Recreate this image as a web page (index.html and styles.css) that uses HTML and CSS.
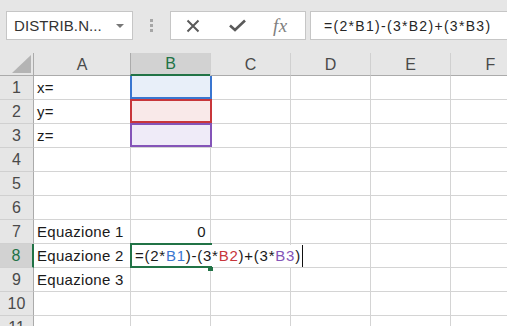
FILE: index.html
```html
<!DOCTYPE html>
<html lang="it">
<head>
    <meta charset="UTF-8">
    <title>Foglio di calcolo</title>
    <link rel="stylesheet" href="styles.css">
</head>
<body>
    <!-- Barra della formula -->
    <div class="toolbar">
        <div class="name-box">
            <span class="name-text">DISTRIB.N...</span>
            <span class="name-arrow"></span>
        </div>
        <div class="grip">
            <span></span><span></span><span></span>
        </div>
        <div class="fx-box">
            <svg class="icon-cancel" width="14" height="14" viewBox="0 0 14 14">
                <path d="M1.5 1.5 L12.5 12.5 M12.5 1.5 L1.5 12.5" stroke="#5a5a5a" stroke-width="2" fill="none"/>
            </svg>
            <svg class="icon-ok" width="17" height="13" viewBox="0 0 17 13">
                <path d="M1 6.5 L6 11 L16 1.5" stroke="#5a5a5a" stroke-width="2.6" fill="none"/>
            </svg>
            <span class="fx">fx</span>
        </div>
        <div class="formula-input">=(2*B1)-(3*B2)+(3*B3)</div>
    </div>

    <!-- Griglia -->
    <div class="sheet">
        <div class="hdr corner">
            <svg width="19" height="18" viewBox="0 0 19 18"><polygon points="19,0 19,18 0,18" fill="#b4b4b4"/></svg>
        </div>
        <div class="hdr col first">A</div>
        <div class="hdr col sel">B</div>
        <div class="hdr col">C</div>
        <div class="hdr col">D</div>
        <div class="hdr col">E</div>
        <div class="hdr col">F</div>

        <div class="hdr row">1</div>
        <div class="cell first">x=</div>
        <div class="cell ref ref-blue"></div>
        <div class="cell"></div><div class="cell"></div><div class="cell"></div><div class="cell"></div>

        <div class="hdr row">2</div>
        <div class="cell first">y=</div>
        <div class="cell ref ref-red"></div>
        <div class="cell"></div><div class="cell"></div><div class="cell"></div><div class="cell"></div>

        <div class="hdr row">3</div>
        <div class="cell first">z=</div>
        <div class="cell ref ref-purple"></div>
        <div class="cell"></div><div class="cell"></div><div class="cell"></div><div class="cell"></div>

        <div class="hdr row">4</div>
        <div class="cell first"></div>
        <div class="cell"></div><div class="cell"></div><div class="cell"></div><div class="cell"></div><div class="cell"></div>

        <div class="hdr row">5</div>
        <div class="cell first"></div>
        <div class="cell"></div><div class="cell"></div><div class="cell"></div><div class="cell"></div><div class="cell"></div>

        <div class="hdr row">6</div>
        <div class="cell first"></div>
        <div class="cell"></div><div class="cell"></div><div class="cell"></div><div class="cell"></div><div class="cell"></div>

        <div class="hdr row">7</div>
        <div class="cell first">Equazione 1</div>
        <div class="cell num">0</div>
        <div class="cell"></div><div class="cell"></div><div class="cell"></div><div class="cell"></div>

        <div class="hdr row sel">8</div>
        <div class="cell first">Equazione 2</div>
        <div class="cell active">
            <span class="edit">=(2*<span class="c-blue">B1</span>)-(3*<span class="c-red">B2</span>)+(3*<span class="c-purple">B3</span>)</span>
            <span class="handle"></span>
        </div>
        <div class="cell"></div><div class="cell"></div><div class="cell"></div><div class="cell"></div>

        <div class="hdr row">9</div>
        <div class="cell first">Equazione 3</div>
        <div class="cell"></div><div class="cell"></div><div class="cell"></div><div class="cell"></div><div class="cell"></div>

        <div class="hdr row">10</div>
        <div class="cell first"></div>
        <div class="cell"></div><div class="cell"></div><div class="cell"></div><div class="cell"></div><div class="cell"></div>

        <div class="hdr row">11</div>
        <div class="cell first"></div>
        <div class="cell"></div><div class="cell"></div><div class="cell"></div><div class="cell"></div><div class="cell"></div>
    </div>
</body>
</html>
```

FILE: styles.css
```css
/* Base */
body {
    margin: 0;
    background-color: #e6e6e6;
    font-family: 'Liberation Sans', Arial, sans-serif;
    color: #222;
    overflow: hidden;
    height: 326px;
}

/* Barra della formula */
.toolbar {
    display: flex;
    align-items: stretch;
    height: 29px;
    padding: 11px 0 13px 6px;
}

.name-box {
    width: 127px;
    background: white;
    border: 1px solid #c6c6c6;
    display: flex;
    align-items: center;
    justify-content: space-between;
    padding: 0 8px 0 7px;
    box-sizing: border-box;
}

.name-text {
    font-size: 15px;
    color: #333;
    letter-spacing: 0.1px;
}

.name-arrow {
    width: 0;
    height: 0;
    border-left: 4px solid transparent;
    border-right: 4px solid transparent;
    border-top: 4px solid #777;
}

.grip {
    width: 37px;
    display: flex;
    flex-direction: column;
    align-items: center;
    justify-content: center;
    gap: 2px;
}

.grip span {
    width: 3px;
    height: 3px;
    background: #a6a6a6;
}

.fx-box {
    width: 136px;
    background: white;
    border: 1px solid #c6c6c6;
    box-sizing: border-box;
    display: flex;
    align-items: center;
    padding-left: 15px;
}

.icon-cancel {
    margin-right: 29px;
}

.icon-ok {
    margin-right: 27px;
}

.fx {
    font-family: 'Liberation Serif', 'Times New Roman', serif;
    font-style: italic;
    font-size: 19px;
    color: #7f7f7f;
    letter-spacing: 0.5px;
}

.formula-input {
    flex: 1;
    margin-left: 4px;
    background: white;
    border: 1px solid #c6c6c6;
    border-right: none;
    display: flex;
    align-items: center;
    padding-left: 13px;
    font-size: 14px;
    letter-spacing: 1.3px;
    color: #262626;
}

/* Griglia */
.sheet {
    display: grid;
    grid-template-columns: 34px 96px 80px 80px 80px 80px 80px;
    grid-template-rows: 23px repeat(11, 24px);
    background: white;
    font-size: 15px;
}

.hdr {
    background: #e6e6e6;
    color: #4a4a4a;
    display: flex;
    align-items: center;
    justify-content: center;
    box-sizing: border-box;
}

.corner {
    border-right: 1px solid #ababab;
    border-bottom: 1px solid #ababab;
    align-items: flex-end;
    justify-content: flex-end;
    padding: 0 2px 2px 0;
}

.hdr.col {
    border-bottom: 1px solid #ababab;
    border-left: 1px solid #d0d0d0;
    font-size: 16px;
    padding-top: 1px;
}

.hdr.col.first {
    border-left: none;
}

.hdr.col.sel {
    background: #d2d2d2;
    color: #217346;
    border-bottom: 2px solid #217346;
    border-left-color: #ababab;
}

.hdr.row {
    border-right: 1px solid #ababab;
    border-bottom: 1px solid #d0d0d0;
    font-size: 16px;
}

.hdr.row.sel {
    background: #d2d2d2;
    color: #217346;
    border-right: 2px solid #217346;
}

.cell {
    border-left: 1px solid #d4d4d4;
    border-bottom: 1px solid #d4d4d4;
    display: flex;
    align-items: center;
    padding: 0 3px;
    white-space: nowrap;
    box-sizing: border-box;
    letter-spacing: 0.3px;
    color: #1a1a1a;
}

.cell.first {
    border-left: none;
}

.cell.num {
    justify-content: flex-end;
    padding-right: 4px;
}

/* Riferimenti evidenziati */
.ref {
    position: relative;
}

.ref::after {
    content: "";
    position: absolute;
    left: -1px;
    right: -2px;
    top: -1px;
    bottom: 0;
    border: 2px solid;
}

.ref-blue {
    background: #e8eff9;
}

.ref-blue::after {
    border-color: #3a76d0;
    border-top: none;
    top: 0;
}

.ref-red {
    background: #f9e9e9;
}

.ref-red::after {
    border-color: #c8363b;
}

.ref-purple {
    background: #efebf8;
}

.ref-purple::after {
    border-color: #8454b8;
}

/* Cella attiva */
.active {
    position: relative;
    z-index: 2;
    padding-left: 4px;
}

.active::before {
    content: "";
    position: absolute;
    left: -1px;
    right: -2px;
    top: -1px;
    bottom: -1px;
    border: 2px solid #217346;
    border-right: none;
}

.edit {
    background: white;
    padding: 1px 1px 1px 0;
    border-right: 1px solid #111;
    letter-spacing: 0.75px;
    line-height: 20px;
}

.c-blue {
    color: #3a76d0;
}

.c-red {
    color: #c8363b;
}

.c-purple {
    color: #8454b8;
}

.handle {
    position: absolute;
    right: -3px;
    bottom: -4px;
    width: 5px;
    height: 4px;
    background: #217346;
}
```
